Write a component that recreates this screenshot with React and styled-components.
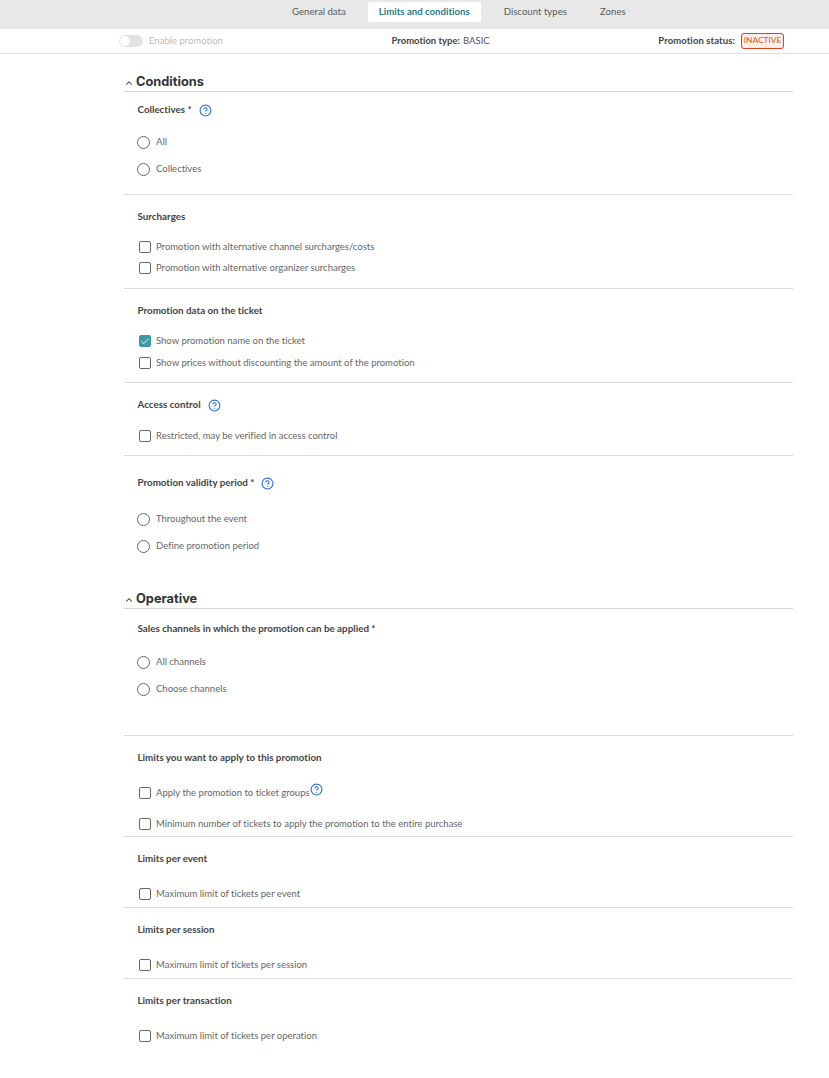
import React from 'react';
import styled, { createGlobalStyle } from 'styled-components';
import { ChevronUp, CircleHelp, Check } from 'lucide-react';

const Global = createGlobalStyle`
  html, body { margin: 0; padding: 0; background: #fff; }
  body {
    font-family: "Lato", "Open Sans", sans-serif;
    font-variant-ligatures: none;
    color: #555;
  }
`;

const TabBar = styled.div`
  display: flex;
  align-items: flex-start;
  height: 29px;
  padding: 2px 0 0 281px;
  box-sizing: border-box;
  background: #e8e8e8;
`;

const Tab = styled.div`
  height: 20px;
  line-height: 19px;
  padding: 0 11px;
  margin-right: ${(p) => p.$gap || 11}px;
  font-size: 9.65px;
  font-weight: ${(p) => (p.$active ? 700 : 400)};
  color: ${(p) => (p.$active ? '#1f7a8c' : '#5b5b5b')};
  background: ${(p) => (p.$active ? '#fff' : 'transparent')};
  border-radius: 2px;
`;

const StatusBar = styled.div`
  display: flex;
  justify-content: space-between;
  align-items: center;
  height: 25px;
  padding: 0 45px 2px 119px;
  box-sizing: border-box;
  border-bottom: 1px solid #dcdcdc;
  font-size: 9.5px;
`;

const StatusItem = styled.div`
  display: flex;
  align-items: center;
  color: ${(p) => (p.$muted ? '#bbb' : '#555')};
  letter-spacing: ${(p) => (p.$wide ? '0.1px' : '0')};
  b { color: #444; margin-right: 3px; }
`;

const Toggle = styled.span`
  width: 24px;
  height: 12px;
  margin: 2px 6px 0 0;
  border-radius: 6px;
  background: #e2e2e2;
  display: flex;
  align-items: center;
  padding-left: 1px;
  box-sizing: border-box;
  &::before {
    content: '';
    width: 10px;
    height: 10px;
    border-radius: 50%;
    background: #fff;
  }
`;

const Badge = styled.span`
  height: 16px;
  line-height: 13px;
  width: 43px;
  margin: 2px 0 0 3px;
  box-sizing: border-box;
  text-align: center;
  letter-spacing: 0;
  border: 1px solid #d9411e;
  border-radius: 3px;
  background: #fdeee8;
  color: #e0562a;
  font-size: 8.4px;
`;

const Main = styled.main`
  width: 669px;
  margin-left: 124px;
  padding-top: 19px;
`;

const Section = styled.section`
  padding-bottom: ${(p) => p.$bottom || 0}px;
`;

const Heading = styled.h2`
  display: flex;
  align-items: center;
  height: 16px;
  padding-bottom: 2px;
  margin: 0;
  border-bottom: 1px solid #d5d5d5;
  font-family: "Inter", sans-serif;
  font-size: 12.8px;
  font-weight: 700;
  color: #333;
  svg { margin: 4px 2px 0 0; }
`;

const Group = styled.div`
  padding: ${(p) => p.$top}px 0 ${(p) => p.$bottom || 0}px 13px;
  border-bottom: ${(p) => (p.$line ? '1px solid #dcdcdc' : 'none')};
`;

const Label = styled.div`
  display: flex;
  align-items: center;
  height: 14px;
  padding: 0 0 2px 0.5px;
  box-sizing: border-box;
  font-size: 9.8px;
  font-weight: 700;
  color: #444;
`;

const Help = styled(CircleHelp)`
  color: #2b6fe3;
  margin: ${(p) => (p.$raise ? `0 0 ${p.$raise}px ${p.$left}px` : `2px 0 0 ${p.$left ?? 7}px`)};
  flex: none;
`;

const Options = styled.div`
  display: flex;
  flex-direction: column;
  gap: ${(p) => p.$gap || 0}px;
  margin-top: ${(p) => p.$top}px;
`;

const Option = styled.div`
  display: flex;
  align-items: center;
  height: 14px;
  font-size: 9.5px;
  color: #666;
`;

const OptionText = styled.span`
  margin-bottom: 2px;
`;

const Radio = styled.span`
  width: 13px;
  height: 13px;
  margin-right: 6px;
  box-sizing: border-box;
  border: 1px solid #666;
  border-radius: 50%;
  flex: none;
`;

const Box = styled.span`
  display: flex;
  align-items: center;
  justify-content: center;
  width: 12px;
  height: 12px;
  margin: 0 5px 0 2px;
  box-sizing: border-box;
  border: 1px solid ${(p) => (p.$checked ? '#3a9aa5' : '#666')};
  border-radius: 2px;
  background: ${(p) => (p.$checked ? '#3a9aa5' : '#fff')};
  color: #fff;
  flex: none;
`;

const RadioOption = ({ children }) => (
  <Option><Radio /><OptionText>{children}</OptionText></Option>
);

const CheckOption = ({ checked, children, help }) => (
  <Option>
    <Box $checked={checked}>{checked && <Check size={11} strokeWidth={2.2} />}</Box>
    <OptionText>{children}</OptionText>
    {help}
  </Option>
);

export default function App() {
  return (
    <>
      <Global />
      <TabBar>
        <Tab>General data</Tab>
        <Tab $active $gap={12}>Limits and conditions</Tab>
        <Tab>Discount types</Tab>
        <Tab>Zones</Tab>
      </TabBar>
      <StatusBar>
        <StatusItem $muted><Toggle />Enable promotion</StatusItem>
        <StatusItem><b>Promotion type:</b>BASIC</StatusItem>
        <StatusItem $wide><b>Promotion status:</b><Badge>INACTIVE</Badge></StatusItem>
      </StatusBar>
      <Main>
        <Section $bottom={37}>
          <Heading><ChevronUp size={10} strokeWidth={2.5} />Conditions</Heading>
          <Group $top={11} $bottom={18} $line>
            <Label>Collectives *<Help size={13} /></Label>
            <Options $top={18} $gap={13}>
              <RadioOption>All</RadioOption>
              <RadioOption>Collectives</RadioOption>
            </Options>
          </Group>
          <Group $top={15} $bottom={13} $line>
            <Label>Surcharges</Label>
            <Options $top={16} $gap={7}>
              <CheckOption>Promotion with alternative channel surcharges/costs</CheckOption>
              <CheckOption>Promotion with alternative organizer surcharges</CheckOption>
            </Options>
          </Group>
          <Group $top={15} $bottom={12} $line>
            <Label>Promotion data on the ticket</Label>
            <Options $top={16} $gap={8}>
              <CheckOption checked>Show promotion name on the ticket</CheckOption>
              <CheckOption>Show prices without discounting the amount of the promotion</CheckOption>
            </Options>
          </Group>
          <Group $top={15} $bottom={12} $line>
            <Label>Access control<Help size={13} /></Label>
            <Options $top={17}>
              <CheckOption>Restricted, may be verified in access control</CheckOption>
            </Options>
          </Group>
          <Group $top={20}>
            <Label>Promotion validity period *<Help size={13} /></Label>
            <Options $top={22} $gap={13}>
              <RadioOption>Throughout the event</RadioOption>
              <RadioOption>Define promotion period</RadioOption>
            </Options>
          </Group>
        </Section>
        <Section>
          <Heading><ChevronUp size={10} strokeWidth={2.5} />Operative</Heading>
          <Group $top={13} $bottom={39} $line>
            <Label>Sales channels in which the promotion can be applied *</Label>
            <Options $top={19} $gap={13}>
              <RadioOption>All channels</RadioOption>
              <RadioOption>Choose channels</RadioOption>
            </Options>
          </Group>
          <Group $top={15} $bottom={5} $line>
            <Label>Limits you want to apply to this promotion</Label>
            <Options $top={21} $gap={17}>
              <CheckOption help={<Help size={13} $left={0} $raise={8} />}>Apply the promotion to ticket groups</CheckOption>
              <CheckOption>Minimum number of tickets to apply the promotion to the entire purchase</CheckOption>
            </Options>
          </Group>
          <Group $top={15} $bottom={6} $line>
            <Label>Limits per event</Label>
            <Options $top={21}>
              <CheckOption>Maximum limit of tickets per event</CheckOption>
            </Options>
          </Group>
          <Group $top={15} $bottom={6} $line>
            <Label>Limits per session</Label>
            <Options $top={21}>
              <CheckOption>Maximum limit of tickets per session</CheckOption>
            </Options>
          </Group>
          <Group $top={15}>
            <Label>Limits per transaction</Label>
            <Options $top={21}>
              <CheckOption>Maximum limit of tickets per operation</CheckOption>
            </Options>
          </Group>
        </Section>
      </Main>
    </>
  );
}
